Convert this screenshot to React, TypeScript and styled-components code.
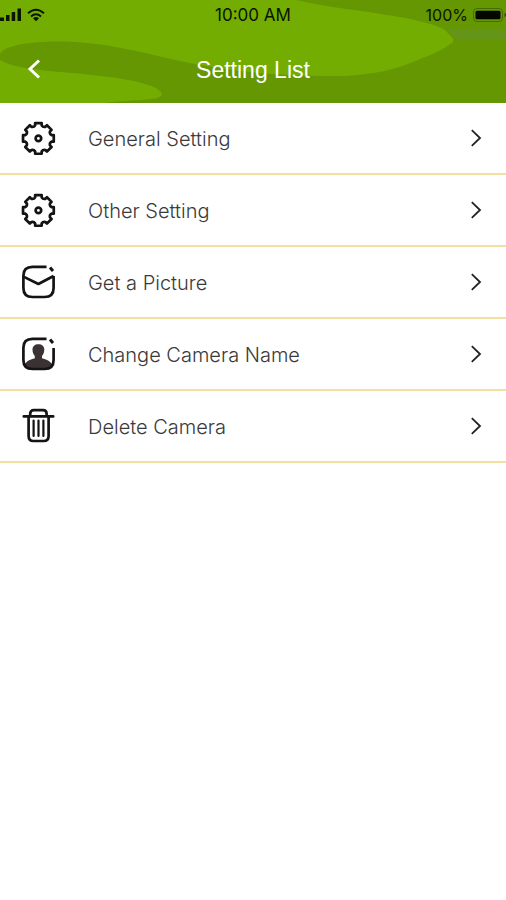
import React from "react";
import styled, { createGlobalStyle } from "styled-components";

const GlobalStyle = createGlobalStyle`
  *, *::before, *::after { box-sizing: border-box; }
  body { margin: 0; background: #fff; }
`;

const Page = styled.div`
  min-height: 100vh;
  background: #fff;
  font-family: Inter, "Liberation Sans", sans-serif;
`;

const Header = styled.header`
  position: relative;
  isolation: isolate;
  overflow: hidden;
  background: #659703;
`;

const Backdrop = styled.svg`
  position: absolute;
  inset: 0;
  z-index: -1;
  width: 100%;
  height: 100%;
`;

const StatusBar = styled.div`
  display: grid;
  grid-template-columns: 1fr auto 1fr;
  align-items: center;
  height: 30px;
  color: #0b1400;
  font-size: 16px;
  line-height: 20px;
`;

const StatusGroup = styled.div<{ $end?: boolean }>`
  display: flex;
  align-items: center;
  justify-content: ${(p) => (p.$end ? "flex-end" : "flex-start")};
  gap: 5px;

  svg {
    display: block;
  }
`;

const Clock = styled.span`
  font-size: 17px;
`;

const NavBar = styled.div`
  display: grid;
  grid-template-columns: 68px 1fr 68px;
  align-items: center;
  height: 73px;
  padding-top: 6px;
`;

const BackButton = styled.button`
  display: flex;
  align-items: center;
  justify-content: center;
  height: 48px;
  padding: 0;
  border: 0;
  background: none;
  cursor: pointer;
`;

const Title = styled.h1`
  margin: 0;
  color: #fff;
  font-family: "Liberation Sans", Arial, sans-serif;
  font-size: 23px;
  font-weight: 400;
  line-height: 28px;
  text-align: center;
`;

const List = styled.ul`
  margin: 0;
  padding: 0;
  list-style: none;
`;

const Item = styled.li`
  border-bottom: 2px solid #f1e0a0;
`;

const RowButton = styled.button`
  display: flex;
  align-items: center;
  width: 100%;
  height: 70px;
  padding: 0 24px 0 20px;
  border: 0;
  background: none;
  color: #3a3a3a;
  font-family: inherit;
  font-size: 20px;
  font-weight: 300;
  line-height: 28px;
  text-align: left;
  cursor: pointer;

  svg {
    flex: none;
  }
`;

const Label = styled.span`
  flex: 1;
  padding-left: 32px;
  padding-top: 2px;
`;

const INK = "#151314";

const lineProps = {
  width: 36,
  height: 36,
  viewBox: "0 0 36 36",
  fill: "none",
  stroke: INK,
  strokeWidth: 2.7,
  strokeLinecap: "round" as const,
  strokeLinejoin: "round" as const,
  "aria-hidden": true,
};

// Eight flat teeth joined by shallow curved notches around (18.4, 18.4).
function gearPath() {
  const c = 18.4;
  const at = (deg: number, r: number) => {
    const a = (deg * Math.PI) / 180;
    return `${(c + r * Math.cos(a)).toFixed(2)} ${(c + r * Math.sin(a)).toFixed(2)}`;
  };
  let d = "";
  for (let i = 0; i < 8; i++) {
    const m = i * 45;
    d += `${i ? "L" : "M"}${at(m - 12, 15.7)}L${at(m + 12, 15.7)}L${at(m + 14, 13.5)}`;
    d += `Q${at(m + 22.5, 11.8)} ${at(m + 31, 13.5)}`;
  }
  return d + "Z";
}

const GEAR = gearPath();
const FRAME =
  "M26.5 2.8H12.5Q3.4 2.8 3.4 11.6V24Q3.4 33 12.5 33H24.6Q33.6 33 33.6 24V12";

const GearIcon = () => (
  <svg {...lineProps}>
    <path d={GEAR} />
    <circle cx="18.4" cy="18.4" r="2.8" />
  </svg>
);

const PictureIcon = () => (
  <svg {...lineProps} strokeLinecap="butt">
    <path d={FRAME} />
    <path d="M3.4 12.6L18.4 20L33.6 12" />
    <path d="M30 3.6L33 7" strokeWidth="3" />
  </svg>
);

const PersonIcon = () => (
  <svg {...lineProps} strokeLinecap="butt">
    <path
      d="M4.4 30C5 26.200 8 24 14.800 22.200V20C13.200 18.400 12.500 16.200 12.500 13.600C12.500 10.200 14.800 8.200 18.400 8.200S24.300 10.200 24.300 13.600C24.300 16.200 23.600 18.400 22 20V22.200C28.800 24 31.800 26.200 32.500 30L26 33.200H10.500Z"
      fill="#3b3234"
      stroke="none"
    />
    <path d={FRAME} />
    <path d="M30 3.6L33 7" strokeWidth="3" />
  </svg>
);

const TrashIcon = () => (
  <svg {...lineProps}>
    <path d="M3.8 8.400H33.200M10.200 8V5.800Q10.200 2.200 13.800 2.200H23Q26.600 2.200 26.600 5.800V8" />
    <path d="M8.600 9V28Q8.600 33 13.400 33H23.800Q28.600 33 28.600 28V9" />
    <path d="M13.600 12.500V28M18.500 12.500V28M23.400 12.500V28" strokeWidth="2.200" />
  </svg>
);

const ChevronIcon = () => (
  <svg width="12" height="18" viewBox="0 0 12 18" fill="none" stroke="#222" strokeWidth="1.8" aria-hidden>
    <path d="M1.8 1.2L10 9L1.8 16.8" />
  </svg>
);

const ITEMS: { label: string; Icon: () => React.JSX.Element }[] = [
  { label: "General Setting", Icon: GearIcon },
  { label: "Other Setting", Icon: GearIcon },
  { label: "Get a Picture", Icon: PictureIcon },
  { label: "Change Camera Name", Icon: PersonIcon },
  { label: "Delete Camera", Icon: TrashIcon },
];

export default function App() {
  return (
    <Page>
      <GlobalStyle />
      <Header>
        <Backdrop viewBox="0 0 506 103" preserveAspectRatio="none" aria-hidden>
          <path
            fill="#73ad02"
            d="M0 0H296C330 8 362 10 386 15C410 18 436 24 445 30L453 38.500V42C444 49 434 54 420 59C400 68 374 76 335 76C280 76 235 72 190 63C150 55 115 44 75 42C40 40 4 44 0 54Z"
          />
          <path
            fill="#73ad02"
            d="M0 60C12 67 30 69 60 72C110 76 158 82 162 94C162 101 135 99 105 103H0Z"
          />
          <path fill="#649418" d="M445 29H506V40H459Z" />
        </Backdrop>
        <StatusBar>
          <StatusGroup>
            <svg width="22" height="14" viewBox="0 0 22 14" fill="currentColor" aria-hidden>
              <path d="M0 9.500H4V13H0ZM6 7H9.500V13H6ZM11.700 4H15.200V13H11.700ZM17.500 .5H21V13H17.500Z" />
            </svg>
            <svg width="18" height="14" viewBox="0 0 18 14" fill="none" stroke="currentColor" strokeWidth="2" aria-hidden>
              <path d="M1 5.200Q9-1.800 17 5.200M4 8.400Q9 4 14 8.400" />
              <path d="M6 10.200Q9 7.800 12 10.200L9 13.200Z" fill="currentColor" stroke="none" />
            </svg>
          </StatusGroup>
          <Clock>10:00 AM</Clock>
          <StatusGroup $end>
            <span>100%</span>
            <svg width="33" height="14" viewBox="0 0 33 14" aria-hidden>
              <rect x=".5" y=".5" width="29" height="13" rx="3.500" fill="none" stroke="#476c04" />
              <rect x="2.500" y="2.800" width="25" height="8.400" rx="1.500" fill="#050800" />
              <path d="M31.500 5Q33 5.500 33 7T31.500 9Z" fill="#2c4502" />
            </svg>
          </StatusGroup>
        </StatusBar>
        <NavBar>
          <BackButton type="button" aria-label="Back">
            <svg width="14" height="22" viewBox="0 0 14 22" fill="none" stroke="#fff" strokeWidth="3" aria-hidden>
              <path d="M12 1.500L3 10L12 18.500" />
            </svg>
          </BackButton>
          <Title>Setting List</Title>
        </NavBar>
      </Header>
      <main>
        <List>
          {ITEMS.map(({ label, Icon }) => (
            <Item key={label}>
              <RowButton type="button">
                <Icon />
                <Label>{label}</Label>
                <ChevronIcon />
              </RowButton>
            </Item>
          ))}
        </List>
      </main>
    </Page>
  );
}
